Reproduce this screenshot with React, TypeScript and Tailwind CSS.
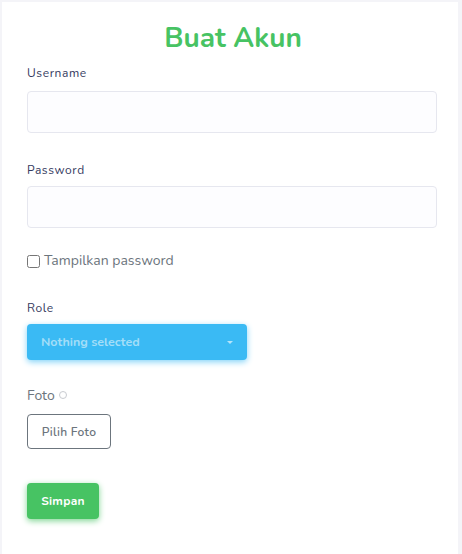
import { useState } from 'react';

const font = { fontFamily: 'Nunito, Lato, "Noto Sans", sans-serif' };

export default function App() {
  const [show, setShow] = useState(false);

  return (
    <div className="min-h-[554px] bg-[#f4f4f8] pt-[2px] pl-[2px] pr-[4px]" style={font}>
      <div className="bg-white min-h-[552px] px-[25px] pt-[18px]">
        {/* Title */}
        <h1 className="text-center text-[28px] font-bold text-[#47c363] leading-[36px] pl-[6px]">
          Buat Akun
        </h1>

        {/* Username */}
        <div className="mt-[9px]">
          <label className="block text-[12px] font-normal text-[#34395e] tracking-[0.6px] leading-[16px]">
            Username
          </label>
          <input
            type="text"
            className="mt-[10px] block w-[410px] h-[42px] rounded-[4px] border border-[#e6e7ef] bg-[#fdfdff] px-3 outline-none"
          />
        </div>

        {/* Password */}
        <div className="mt-[29px]">
          <label className="block text-[12px] font-normal text-[#34395e] tracking-[0.6px] leading-[16px]">
            Password
          </label>
          <input
            type={show ? 'text' : 'password'}
            className="mt-[8px] block w-[410px] h-[42px] rounded-[4px] border border-[#e6e7ef] bg-[#fdfdff] px-3 outline-none"
          />
        </div>

        {/* Show password */}
        <label className="mt-[23px] flex items-center gap-[4px] text-[14px] text-[#6c757d] leading-[20px]">
          <input
            type="checkbox"
            checked={show}
            onChange={(e) => setShow(e.target.checked)}
            className="w-[13px] h-[13px] m-0"
          />
          Tampilkan password
        </label>

        {/* Role */}
        <div className="mt-[29px]">
          <label className="block text-[12px] font-normal text-[#34395e] tracking-[0.6px] leading-[16px]">
            Role
          </label>
          <button className="mt-[8px] flex items-center justify-between w-[220px] h-[36px] rounded-[4px] bg-[#3abaf4] pl-[14px] pr-[14px] shadow-[0_2px_6px_#82d3f8]">
            <span className="text-[12.5px] font-bold text-[#a3def8]">Nothing selected</span>
            <span className="w-0 h-0 border-l-[3px] border-r-[3px] border-t-[3px] border-l-transparent border-r-transparent border-t-[#b5e4fa]" />
          </button>
        </div>

        {/* Foto */}
        <div className="mt-[26px]">
          <div className="flex items-center gap-[4px] text-[14px] text-[#6c757d] leading-[20px]">
            Foto
            <span className="w-[8px] h-[8px] rounded-full border border-[#c8cbd0] mb-[3px]" />
          </div>
          <button className="mt-[8px] h-[35px] w-[84px] rounded-[4px] border border-[#6c757d] text-[12px] font-semibold text-[#6c757d] tracking-[0.3px]">
            Pilih Foto
          </button>
        </div>

        {/* Simpan */}
        <button className="mt-[34px] h-[36px] w-[72px] rounded-[4px] bg-[#47c363] text-[12px] font-bold text-white tracking-[0.3px] shadow-[0_2px_6px_#81d694]">
          Simpan
        </button>
      </div>
    </div>
  );
}
